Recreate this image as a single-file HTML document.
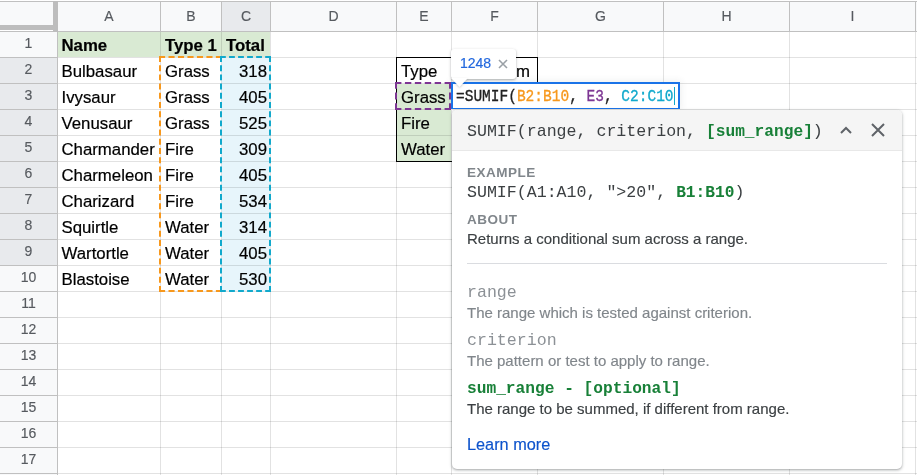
<!DOCTYPE html>
<html><head><meta charset="utf-8"><style>
*{box-sizing:border-box}
html,body{margin:0;padding:0}
body{will-change:transform;width:917px;height:475px;overflow:hidden;position:relative;background:#fff;font-family:"Liberation Sans",sans-serif}
div,span{position:absolute}
.hd{text-align:center;font-size:14px;color:#565a5f;-webkit-text-stroke-width:0.15px}
.c{font-size:16.8px;color:#000;-webkit-text-stroke-width:0.2px;height:25px;line-height:27px;white-space:nowrap}
#ed{left:451px;top:82px;width:229px;height:27px;border:2px solid #1a73e8;border-bottom-width:1px;background:#fff;box-shadow:0 1px 0 #e4e2df,0 0 7px 1px rgba(60,64,67,.09);font-family:"Liberation Mono",monospace;font-size:14.5px;line-height:26px;padding-left:3px;white-space:pre}
#ed .ft{position:absolute;left:3px;top:0;-webkit-text-stroke-width:0.3px;transform:scaleY(1.13);transform-origin:0 18px} #ed .ft span{position:static}
#ed .cur{position:absolute;left:221px;top:3px;width:1px;height:18px;background:#11a9cc}
#tip{left:451px;top:49px;width:65px;height:30px;background:#fff;border-radius:3px;box-shadow:0 1px 3px rgba(60,64,67,.3),0 1px 2px rgba(60,64,67,.15)}
#tip .num{left:9px;top:6px;font-size:14px;color:#2368de;-webkit-text-stroke-width:0.2px;line-height:16px}
#tip .x{left:46px;top:7px;font-size:12px;color:#9aa0a6;line-height:16px}
#tip .arr{left:3px;top:27px;width:0;height:0;border-left:8px solid transparent;border-right:8px solid transparent;border-top:9px solid #fff}
#pop{left:452px;top:110px;width:450px;height:359px;background:#fff;border-radius:5px;box-shadow:0 1px 2px rgba(60,64,67,.3),0 1px 3px 1px rgba(60,64,67,.15);overflow:hidden}
#pop .ph{left:0;top:0;width:450px;height:41px;background:#f5f5f5;border-bottom:1px solid #e8e8e8}
#pop .m{font-family:"Liberation Mono",monospace;font-size:16.6px;color:#3c4043;left:15px;white-space:pre;line-height:20px}
#pop .ph .m{top:12px}
#pop b{font-weight:bold;font-size:16.2px}
#pop .g{color:#188038}
#pop .chev{left:388px;top:16px;position:absolute}
#pop .close{left:419px;top:13px;position:absolute}
#pop .lbl{left:15px;font-size:13.5px;font-weight:bold;color:#80868b;letter-spacing:0.5px;line-height:16px}
#pop .s{left:15px;font-size:15px;line-height:18px;white-space:nowrap;-webkit-text-stroke-width:0.15px}
#pop .hr{left:15px;top:153px;width:420px;height:1px;background:#dadce0}
</style></head><body>
<div style="left:0px;top:2px;width:917px;height:29px;background:#f8f9fa"></div><div style="left:222px;top:2px;width:48px;height:29px;background:#e8eaed"></div><div style="left:0px;top:32px;width:57px;height:443px;background:#f8f9fa"></div><div style="left:0px;top:58px;width:57px;height:207px;background:#e8eaed"></div><div style="left:58px;top:32px;width:212px;height:25px;background:#d9ead3"></div><div style="left:397px;top:84px;width:54px;height:77px;background:#d9ead3"></div><div style="left:222px;top:58px;width:48px;height:233px;background:#e7f5fb"></div><div style="left:160px;top:32px;width:1px;height:443px;background:rgba(0,0,0,0.115)"></div><div style="left:221px;top:32px;width:1px;height:443px;background:rgba(0,0,0,0.115)"></div><div style="left:270px;top:32px;width:1px;height:443px;background:rgba(0,0,0,0.115)"></div><div style="left:396px;top:32px;width:1px;height:443px;background:rgba(0,0,0,0.115)"></div><div style="left:451px;top:32px;width:1px;height:443px;background:rgba(0,0,0,0.115)"></div><div style="left:537px;top:32px;width:1px;height:443px;background:rgba(0,0,0,0.115)"></div><div style="left:663px;top:32px;width:1px;height:443px;background:rgba(0,0,0,0.115)"></div><div style="left:789px;top:32px;width:1px;height:443px;background:rgba(0,0,0,0.115)"></div><div style="left:915px;top:32px;width:1px;height:443px;background:rgba(0,0,0,0.115)"></div><div style="left:58px;top:57px;width:859px;height:1px;background:rgba(0,0,0,0.115)"></div><div style="left:58px;top:83px;width:859px;height:1px;background:rgba(0,0,0,0.115)"></div><div style="left:58px;top:109px;width:859px;height:1px;background:rgba(0,0,0,0.115)"></div><div style="left:58px;top:135px;width:859px;height:1px;background:rgba(0,0,0,0.115)"></div><div style="left:58px;top:161px;width:859px;height:1px;background:rgba(0,0,0,0.115)"></div><div style="left:58px;top:187px;width:859px;height:1px;background:rgba(0,0,0,0.115)"></div><div style="left:58px;top:213px;width:859px;height:1px;background:rgba(0,0,0,0.115)"></div><div style="left:58px;top:239px;width:859px;height:1px;background:rgba(0,0,0,0.115)"></div><div style="left:58px;top:265px;width:859px;height:1px;background:rgba(0,0,0,0.115)"></div><div style="left:58px;top:291px;width:859px;height:1px;background:rgba(0,0,0,0.115)"></div><div style="left:58px;top:317px;width:859px;height:1px;background:rgba(0,0,0,0.115)"></div><div style="left:58px;top:343px;width:859px;height:1px;background:rgba(0,0,0,0.115)"></div><div style="left:58px;top:369px;width:859px;height:1px;background:rgba(0,0,0,0.115)"></div><div style="left:58px;top:395px;width:859px;height:1px;background:rgba(0,0,0,0.115)"></div><div style="left:58px;top:421px;width:859px;height:1px;background:rgba(0,0,0,0.115)"></div><div style="left:58px;top:447px;width:859px;height:1px;background:rgba(0,0,0,0.115)"></div><div style="left:58px;top:473px;width:859px;height:1px;background:rgba(0,0,0,0.115)"></div><div style="left:0px;top:1px;width:917px;height:1px;background:#c0c0c0"></div><div style="left:0px;top:31px;width:917px;height:1px;background:#c0c0c0"></div><div style="left:57px;top:1px;width:1px;height:31px;background:#c0c0c0"></div><div style="left:160px;top:1px;width:1px;height:31px;background:#c0c0c0"></div><div style="left:221px;top:1px;width:1px;height:31px;background:#c0c0c0"></div><div style="left:270px;top:1px;width:1px;height:31px;background:#c0c0c0"></div><div style="left:396px;top:1px;width:1px;height:31px;background:#c0c0c0"></div><div style="left:451px;top:1px;width:1px;height:31px;background:#c0c0c0"></div><div style="left:537px;top:1px;width:1px;height:31px;background:#c0c0c0"></div><div style="left:663px;top:1px;width:1px;height:31px;background:#c0c0c0"></div><div style="left:789px;top:1px;width:1px;height:31px;background:#c0c0c0"></div><div style="left:915px;top:1px;width:1px;height:31px;background:#c0c0c0"></div><div style="left:57px;top:32px;width:1px;height:443px;background:#c0c0c0"></div><div style="left:0px;top:57px;width:57px;height:1px;background:#c0c0c0"></div><div style="left:0px;top:83px;width:57px;height:1px;background:#c0c0c0"></div><div style="left:0px;top:109px;width:57px;height:1px;background:#c0c0c0"></div><div style="left:0px;top:135px;width:57px;height:1px;background:#c0c0c0"></div><div style="left:0px;top:161px;width:57px;height:1px;background:#c0c0c0"></div><div style="left:0px;top:187px;width:57px;height:1px;background:#c0c0c0"></div><div style="left:0px;top:213px;width:57px;height:1px;background:#c0c0c0"></div><div style="left:0px;top:239px;width:57px;height:1px;background:#c0c0c0"></div><div style="left:0px;top:265px;width:57px;height:1px;background:#c0c0c0"></div><div style="left:0px;top:291px;width:57px;height:1px;background:#c0c0c0"></div><div style="left:0px;top:317px;width:57px;height:1px;background:#c0c0c0"></div><div style="left:0px;top:343px;width:57px;height:1px;background:#c0c0c0"></div><div style="left:0px;top:369px;width:57px;height:1px;background:#c0c0c0"></div><div style="left:0px;top:395px;width:57px;height:1px;background:#c0c0c0"></div><div style="left:0px;top:421px;width:57px;height:1px;background:#c0c0c0"></div><div style="left:0px;top:447px;width:57px;height:1px;background:#c0c0c0"></div><div style="left:0px;top:473px;width:57px;height:1px;background:#c0c0c0"></div><div style="left:53px;top:1px;width:5px;height:31px;background:#bdbdbd"></div><div style="left:0px;top:25px;width:53px;height:5px;background:#bdbdbd"></div><div style="left:0px;top:30px;width:53px;height:1px;background:#fff"></div>
<svg width="917" height="475" style="position:absolute;left:0;top:0"><rect x="396.5" y="57.5" width="141" height="104" fill="none" stroke="#000" stroke-width="1"/><path d="M159 57 L222 57" stroke="#f7981d" stroke-width="2" stroke-dasharray="6.117 3.364" fill="none"/><path d="M159 291 L222 291" stroke="#f7981d" stroke-width="2" stroke-dasharray="6.117 3.364" fill="none"/><path d="M160 56 L160 292" stroke="#f7981d" stroke-width="2" stroke-dasharray="5.937 3.265" fill="none"/><path d="M220 57 L271 57" stroke="#11a9cc" stroke-width="2" stroke-dasharray="5.829 3.206" fill="none"/><path d="M220 291 L271 291" stroke="#11a9cc" stroke-width="2" stroke-dasharray="5.829 3.206" fill="none"/><path d="M221 56 L221 292" stroke="#11a9cc" stroke-width="2" stroke-dasharray="5.937 3.265" fill="none"/><path d="M270 56 L270 292" stroke="#11a9cc" stroke-width="2" stroke-dasharray="5.937 3.265" fill="none"/><path d="M395 83 L451 83" stroke="#7e3794" stroke-width="2" stroke-dasharray="6.400 3.520" fill="none"/><path d="M395 109 L451 109" stroke="#7e3794" stroke-width="2" stroke-dasharray="6.400 3.520" fill="none"/><path d="M396 82 L396 110" stroke="#7e3794" stroke-width="2" stroke-dasharray="6.829 3.756" fill="none"/><path d="M450 82 L450 110" stroke="#7e3794" stroke-width="2" stroke-dasharray="6.829 3.756" fill="none"/></svg>
<div class="hd" style="left:58px;top:2px;width:102px;height:29px;line-height:29px">A</div><div class="hd" style="left:161px;top:2px;width:60px;height:29px;line-height:29px">B</div><div class="hd" style="left:222px;top:2px;width:48px;height:29px;line-height:29px">C</div><div class="hd" style="left:271px;top:2px;width:125px;height:29px;line-height:29px">D</div><div class="hd" style="left:397px;top:2px;width:54px;height:29px;line-height:29px">E</div><div class="hd" style="left:452px;top:2px;width:85px;height:29px;line-height:29px">F</div><div class="hd" style="left:538px;top:2px;width:125px;height:29px;line-height:29px">G</div><div class="hd" style="left:664px;top:2px;width:125px;height:29px;line-height:29px">H</div><div class="hd" style="left:790px;top:2px;width:125px;height:29px;line-height:29px">I</div><div class="hd" style="left:0px;top:31.4px;width:57px;height:25px;line-height:25px">1</div><div class="hd" style="left:0px;top:57.4px;width:57px;height:25px;line-height:25px">2</div><div class="hd" style="left:0px;top:83.4px;width:57px;height:25px;line-height:25px">3</div><div class="hd" style="left:0px;top:109.4px;width:57px;height:25px;line-height:25px">4</div><div class="hd" style="left:0px;top:135.4px;width:57px;height:25px;line-height:25px">5</div><div class="hd" style="left:0px;top:161.4px;width:57px;height:25px;line-height:25px">6</div><div class="hd" style="left:0px;top:187.4px;width:57px;height:25px;line-height:25px">7</div><div class="hd" style="left:0px;top:213.4px;width:57px;height:25px;line-height:25px">8</div><div class="hd" style="left:0px;top:239.4px;width:57px;height:25px;line-height:25px">9</div><div class="hd" style="left:0px;top:265.4px;width:57px;height:25px;line-height:25px">10</div><div class="hd" style="left:0px;top:291.4px;width:57px;height:25px;line-height:25px">11</div><div class="hd" style="left:0px;top:317.4px;width:57px;height:25px;line-height:25px">12</div><div class="hd" style="left:0px;top:343.4px;width:57px;height:25px;line-height:25px">13</div><div class="hd" style="left:0px;top:369.4px;width:57px;height:25px;line-height:25px">14</div><div class="hd" style="left:0px;top:395.4px;width:57px;height:25px;line-height:25px">15</div><div class="hd" style="left:0px;top:421.4px;width:57px;height:25px;line-height:25px">16</div><div class="hd" style="left:0px;top:447.4px;width:57px;height:25px;line-height:25px">17</div><div class="c" style="left:61.5px;top:32px;font-weight:bold;">Name</div><div class="c" style="left:165px;top:32px;font-weight:bold;">Type 1</div><div class="c" style="left:226px;top:32px;font-weight:bold;">Total</div><div class="c" style="left:61.5px;top:58px;">Bulbasaur</div><div class="c" style="left:165px;top:58px;">Grass</div><div class="c" style="right:650px;top:58px;text-align:right">318</div><div class="c" style="left:61.5px;top:84px;">Ivysaur</div><div class="c" style="left:165px;top:84px;">Grass</div><div class="c" style="right:650px;top:84px;text-align:right">405</div><div class="c" style="left:61.5px;top:110px;">Venusaur</div><div class="c" style="left:165px;top:110px;">Grass</div><div class="c" style="right:650px;top:110px;text-align:right">525</div><div class="c" style="left:61.5px;top:136px;">Charmander</div><div class="c" style="left:165px;top:136px;">Fire</div><div class="c" style="right:650px;top:136px;text-align:right">309</div><div class="c" style="left:61.5px;top:162px;">Charmeleon</div><div class="c" style="left:165px;top:162px;">Fire</div><div class="c" style="right:650px;top:162px;text-align:right">405</div><div class="c" style="left:61.5px;top:188px;">Charizard</div><div class="c" style="left:165px;top:188px;">Fire</div><div class="c" style="right:650px;top:188px;text-align:right">534</div><div class="c" style="left:61.5px;top:214px;">Squirtle</div><div class="c" style="left:165px;top:214px;">Water</div><div class="c" style="right:650px;top:214px;text-align:right">314</div><div class="c" style="left:61.5px;top:240px;">Wartortle</div><div class="c" style="left:165px;top:240px;">Water</div><div class="c" style="right:650px;top:240px;text-align:right">405</div><div class="c" style="left:61.5px;top:266px;">Blastoise</div><div class="c" style="left:165px;top:266px;">Water</div><div class="c" style="right:650px;top:266px;text-align:right">530</div><div class="c" style="left:401px;top:58px">Type</div><div class="c" style="left:401px;top:84px">Grass</div><div class="c" style="left:401px;top:110px">Fire</div><div class="c" style="left:401px;top:136px">Water</div><div class="c" style="right:387px;top:58px">Sum</div>
<div id="ed"><div class="ft"><span style="color:#222">=SUMIF(</span><span style="color:#f7981d">B2:B10</span><span style="color:#222">, </span><span style="color:#7e3794">E3</span><span style="color:#222">, </span><span style="color:#11a9cc">C2:C10</span></div><span class="cur"></span></div>
<div id="pop">
 <div class="ph"><span class="m">SUMIF(range, criterion, <b class="g">[sum_range]</b>)</span>
  <svg class="chev" width="12" height="8" viewBox="0 0 12 8"><path d="M1 7 L6 2 L11 7" fill="none" stroke="#5f6368" stroke-width="2"/></svg>
  <svg class="close" width="14" height="14" viewBox="0 0 14 14"><path d="M1 1 L13 13 M13 1 L1 13" fill="none" stroke="#5f6368" stroke-width="2"/></svg>
 </div>
 <div class="lbl" style="top:55px">EXAMPLE</div>
 <div class="m" style="top:73px">SUMIF(A1:A10, "&gt;20", <b class="g">B1:B10</b>)</div>
 <div class="lbl" style="top:102px">ABOUT</div>
 <div class="s" style="top:120px;color:#3c4043">Returns a conditional sum across a range.</div>
 <div class="hr"></div>
 <div class="m" style="top:173px;color:#8c9196">range</div>
 <div class="s" style="top:194px;color:#80868b">The range which is tested against criterion.</div>
 <div class="m" style="top:221px;color:#8c9196">criterion</div>
 <div class="s" style="top:241.5px;color:#80868b">The pattern or test to apply to range.</div>
 <div class="m" style="top:269px"><b class="g">sum_range - [optional]</b></div>
 <div class="s" style="top:289.5px;color:#3c4043">The range to be summed, if different from range.</div>
 <div class="s" style="top:324px;color:#0d53cc;font-size:16.3px;line-height:20px">Learn more</div>
</div>
<div id="tip"><span class="num">1248</span><svg style="position:absolute;left:47px;top:10px" width="10" height="10" viewBox="0 0 10 10"><path d="M1 1 L9 9 M9 1 L1 9" stroke="#9aa0a6" stroke-width="1.6" fill="none"/></svg><svg style="position:absolute;left:0;top:29px;overflow:visible;filter:drop-shadow(0 1px 1px rgba(60,64,67,.25))" width="18" height="11" viewBox="0 0 18 11"><path d="M0 0 L8.5 9 L17 0 Z" fill="#fff"/></svg></div>
</body></html>
